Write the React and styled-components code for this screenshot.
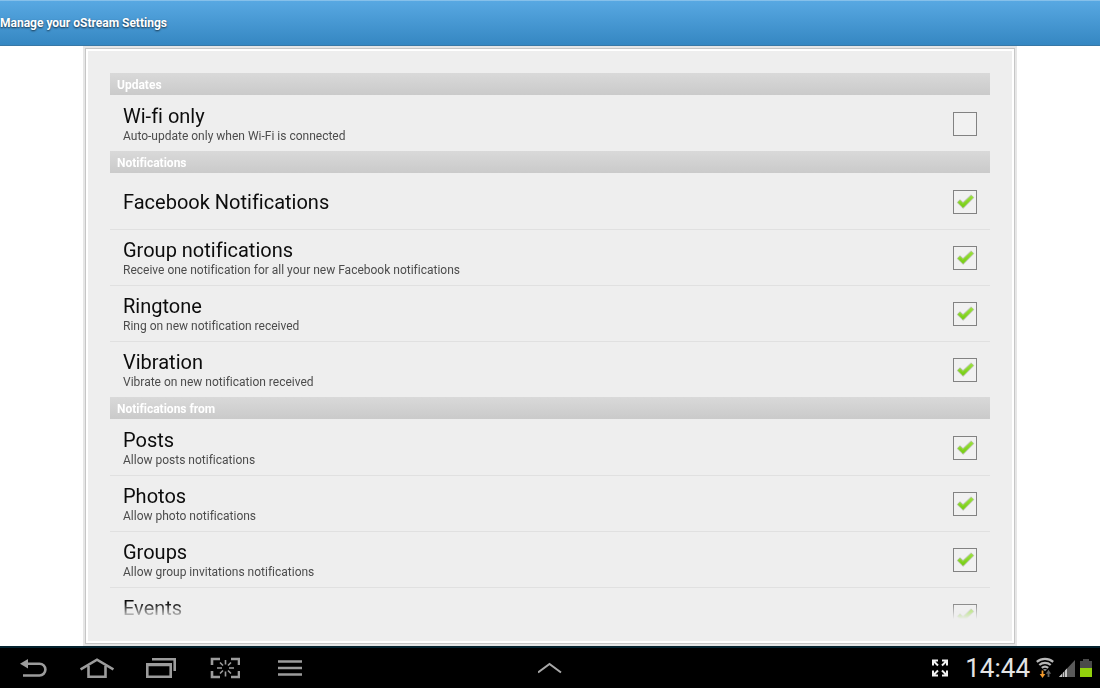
import React, { useState } from "react";
import styled, { createGlobalStyle } from "styled-components";

const GlobalStyle = createGlobalStyle`
  *, *::before, *::after { box-sizing: border-box; }
  body {
    margin: 0;
    background: #fff;
    font-family: Roboto, "Liberation Sans", sans-serif;
    font-variant-ligatures: none;
  }
`;

const Page = styled.div`
  height: 100vh;
  display: flex;
  flex-direction: column;
  overflow: hidden;
`;

const Header = styled.header`
  flex: none;
  height: 46px;
  display: flex;
  align-items: center;
  border-top: 1px solid #86c0ea;
  border-bottom: 1px solid #3878a6;
  background: linear-gradient(#58a8e2, #3587c2);
`;

const Title = styled.h1`
  margin: 0;
  font-size: 12px;
  line-height: 16px;
  font-weight: 700;
  color: #fff;
  text-shadow: 0 1px 2px rgba(0, 0, 0, 0.7);
`;

const Main = styled.main`
  flex: 1;
  min-height: 0;
  display: flex;
  padding: 2px 85px;
`;

const Panel = styled.section`
  flex: 1;
  min-width: 0;
  display: flex;
  padding: 24px;
  border: 1px solid #c6c6c6;
  background: #eee;
  box-shadow: inset 0 0 0 2px #fff, 0 0 0 2px #e6e6e6;
`;

const List = styled.div`
  flex: 1;
  min-width: 0;
  overflow-y: auto;
  scrollbar-width: none;
  mask-image: linear-gradient(#000 calc(100% - 16px), transparent);
`;

const SectionTitle = styled.h2`
  margin: 0;
  height: 22px;
  padding: 0 7px;
  font-size: 12px;
  line-height: 24px;
  font-weight: 700;
  color: #fff;
  background: linear-gradient(#d9d9d9, #cacaca);
`;

const Row = styled.label`
  height: 56px;
  display: flex;
  align-items: center;
  justify-content: space-between;
  padding: 1px 13px 0;
  border-top: 1px solid transparent;
  cursor: pointer;
  & + & { border-top-color: #e0e0e0; }
`;

const RowText = styled.span`
  display: flex;
  flex-direction: column;
`;

const RowName = styled.span`
  font-size: 20px;
  line-height: 24px;
  color: #0c0c0c;
`;

const RowHint = styled.span`
  min-height: 16px;
  font-size: 12px;
  line-height: 16px;
  color: #4c4c4c;
`;

const CheckHolder = styled.span`
  display: grid;
  & > * { grid-area: 1 / 1; }
`;

const CheckInput = styled.input`
  appearance: none;
  width: 24px;
  height: 24px;
  margin: 0;
  border: 1px solid #828282;
  background: #f1f1f1;
  &:not(:checked) + svg { visibility: hidden; }
`;

const TickSvg = styled.svg`
  width: 24px;
  height: 24px;
  pointer-events: none;
`;

const NavBar = styled.nav`
  flex: none;
  height: 42px;
  display: grid;
  grid-template-columns: 1fr auto 1fr;
  align-items: center;
  border-top: 2px solid #04222e;
  background: #000;
`;

const NavKeys = styled.div`
  display: flex;
  padding-left: 1px;
`;

const NavButton = styled.button`
  display: flex;
  justify-content: center;
  align-items: center;
  width: 64px;
  height: 40px;
  padding: 0;
  border: 0;
  background: none;
  color: #9c9c9c;
`;

const Status = styled.div`
  display: flex;
  align-items: center;
  justify-content: flex-end;
  padding-right: 8px;
`;

const Clock = styled.time`
  margin: 0 6px 0 16px;
  font-size: 26px;
  line-height: 32px;
  color: #e4e4e4;
`;

const StatusIcons = styled.div`
  display: flex;
  align-items: center;
  gap: 4px;
`;

const Tick = () => (
  <TickSvg viewBox="0 0 24 24" aria-hidden="true">
    <defs>
      <linearGradient id="tick" x1="0" y1="0" x2="0" y2="1">
        <stop offset="0" stopColor="#9be03c" />
        <stop offset="1" stopColor="#74cc12" />
      </linearGradient>
    </defs>
    <path d="M4.600 12.400 7 10l3 2.800 8-7.500 2.500 2.200L10.200 17.900z" fill="none" stroke="#c9c9c9" strokeWidth="1.400" strokeLinejoin="round" />
    <path d="M5 12.400 7 10.400l3 3 8.200-7.700 1.900 1.700L10.100 17.400z" fill="url(#tick)" stroke="url(#tick)" strokeWidth=".9" strokeLinejoin="round" />
  </TickSvg>
);

const BackIcon = () => (
  <svg width="28" height="22" viewBox="0 0 28 22" fill="none">
    <path d="M7 6.700h13.500a5.800 5.800 0 0 1 0 11.800H4" stroke="currentColor" strokeWidth="2.600" />
    <path d="M1 6.700l8-4.700v9.400z" fill="currentColor" />
  </svg>
);

const HomeIcon = () => (
  <svg width="34" height="22" viewBox="0 0 34 22" fill="none" stroke="currentColor" strokeWidth="2.600">
    <path d="M.6 12.500 17 2.700l16.400 9.800" />
    <path d="M8.500 9v10.700h17V9" />
  </svg>
);

const RecentIcon = () => (
  <svg width="30" height="22" viewBox="0 0 30 22" fill="none" stroke="currentColor">
    <path d="M1.300 8v11.700h23.400V8z" strokeWidth="2.600" />
    <path d="M0 7.500h26" strokeWidth="3" />
    <path d="M6 2.300h22.700V14" strokeWidth="2.600" />
  </svg>
);

const CaptureIcon = () => (
  <svg width="30" height="22" viewBox="0 0 30 22" fill="none" stroke="currentColor">
    <path d="M10 2H2v6M21 2h8v6M10 20H2v-6M21 20h8v-6" strokeWidth="2.600" />
    <path d="M15.500 3v4.500M15.500 14.500v5M7 11h5M19 11h5M10 5.500l3 3M21 5.500l-3 3M10 16.500l3-3M21 16.500l-3-3" strokeWidth="1.600" />
  </svg>
);

const MenuIcon = () => (
  <svg width="26" height="20" viewBox="0 0 26 20" fill="none" stroke="currentColor" strokeWidth="2.400">
    <path d="M2 3.500h24M2 10h24M2 16.500h24" />
  </svg>
);

const UpIcon = () => (
  <svg width="24" height="12" viewBox="0 0 24 12" fill="none" stroke="#a8a8a8" strokeWidth="2">
    <path d="M0 10.500 11.500 2l11.500 8.500" />
  </svg>
);

const ExpandIcon = () => (
  <svg width="18" height="18" viewBox="0 0 18 18" fill="none" stroke="#f2f2f2" strokeWidth="2">
    <path d="M7 1.500H2v5M2 1.500l5 5M11 1.500h5v5M16 1.500l-5 5M7 16.500H2v-5M2 16.500l5-5M11 16.500h5v-5M16 16.500l-5-5" />
  </svg>
);

const WifiIcon = () => (
  <svg width="18" height="22" viewBox="0 0 18 22" fill="none" stroke="#b8b8b8" strokeWidth="2.200">
    <path d="M.8 4.800C5.500.8 12.500.8 17.200 4.800M3.300 8c3.300-2.900 8.100-2.900 11.400 0M5.800 10.900c1.900-1.600 4.500-1.600 6.400 0" />
    <path d="M7 12.200h4L9 14z" fill="#b8b8b8" stroke="none" />
    <path d="M6.500 13.500v5" stroke="#f39a2d" strokeWidth="1.800" />
    <path d="M3.700 17h5.600l-2.800 4z" fill="#f39a2d" stroke="none" />
    <path d="M12.500 20v-5" stroke="#646464" strokeWidth="1.800" />
    <path d="M9.900 16.800h5.200L12.500 12.800z" fill="#646464" stroke="none" />
  </svg>
);

const SignalIcon = () => (
  <svg width="18" height="20" viewBox="0 0 18 20">
    <path d="M17 2v17H1z" fill="#5a5a5a" />
    <path d="M1 19l3-3.190V19zM5 14.750l1-1.060V19H5zM7 12.620l2-2.120V19H7z" fill="#c8c8c8" />
  </svg>
);

const BatteryIcon = () => (
  <svg width="12" height="20" viewBox="0 0 12 20">
    <path d="M3 1h6v2h3v7H0V3h3z" fill="#4a4a4a" />
    <path d="M0 10h12v9H0z" fill="#92d20c" />
  </svg>
);

const sections = [
  {
    title: "Updates",
    rows: [{ name: "Wi-fi only", hint: "Auto-update only when Wi-Fi is connected", on: false }],
  },
  {
    title: "Notifications",
    rows: [
      { name: "Facebook Notifications", on: true },
      { name: "Group notifications", hint: "Receive one notification for all your new Facebook notifications", on: true },
      { name: "Ringtone", hint: "Ring on new notification received", on: true },
      { name: "Vibration", hint: "Vibrate on new notification received", on: true },
    ],
  },
  {
    title: "Notifications from",
    rows: [
      { name: "Posts", hint: "Allow posts notifications", on: true },
      { name: "Photos", hint: "Allow photo notifications", on: true },
      { name: "Groups", hint: "Allow group invitations notifications", on: true },
      { name: "Events", hint: "", on: true },
    ],
  },
];

function Setting({ name, hint, on }) {
  const [checked, setChecked] = useState(on);
  return (
    <Row>
      <RowText>
        <RowName>{name}</RowName>
        {hint !== undefined && <RowHint>{hint}</RowHint>}
      </RowText>
      <CheckHolder>
        <CheckInput type="checkbox" checked={checked} onChange={(e) => setChecked(e.target.checked)} />
        <Tick />
      </CheckHolder>
    </Row>
  );
}

export default function App() {
  return (
    <Page>
      <GlobalStyle />
      <Header>
        <Title>Manage your oStream Settings</Title>
      </Header>
      <Main>
        <Panel>
          <List>
            {sections.map((section) => (
              <div key={section.title}>
                <SectionTitle>{section.title}</SectionTitle>
                {section.rows.map((row) => (
                  <Setting key={row.name} {...row} />
                ))}
              </div>
            ))}
          </List>
        </Panel>
      </Main>
      <NavBar>
        <NavKeys>
          <NavButton aria-label="Back"><BackIcon /></NavButton>
          <NavButton aria-label="Home"><HomeIcon /></NavButton>
          <NavButton aria-label="Recent apps"><RecentIcon /></NavButton>
          <NavButton aria-label="Screenshot"><CaptureIcon /></NavButton>
          <NavButton aria-label="Menu"><MenuIcon /></NavButton>
        </NavKeys>
        <NavButton aria-label="Open tray"><UpIcon /></NavButton>
        <Status>
          <ExpandIcon />
          <Clock>14:44</Clock>
          <StatusIcons>
            <WifiIcon />
            <SignalIcon />
            <BatteryIcon />
          </StatusIcons>
        </Status>
      </NavBar>
    </Page>
  );
}
